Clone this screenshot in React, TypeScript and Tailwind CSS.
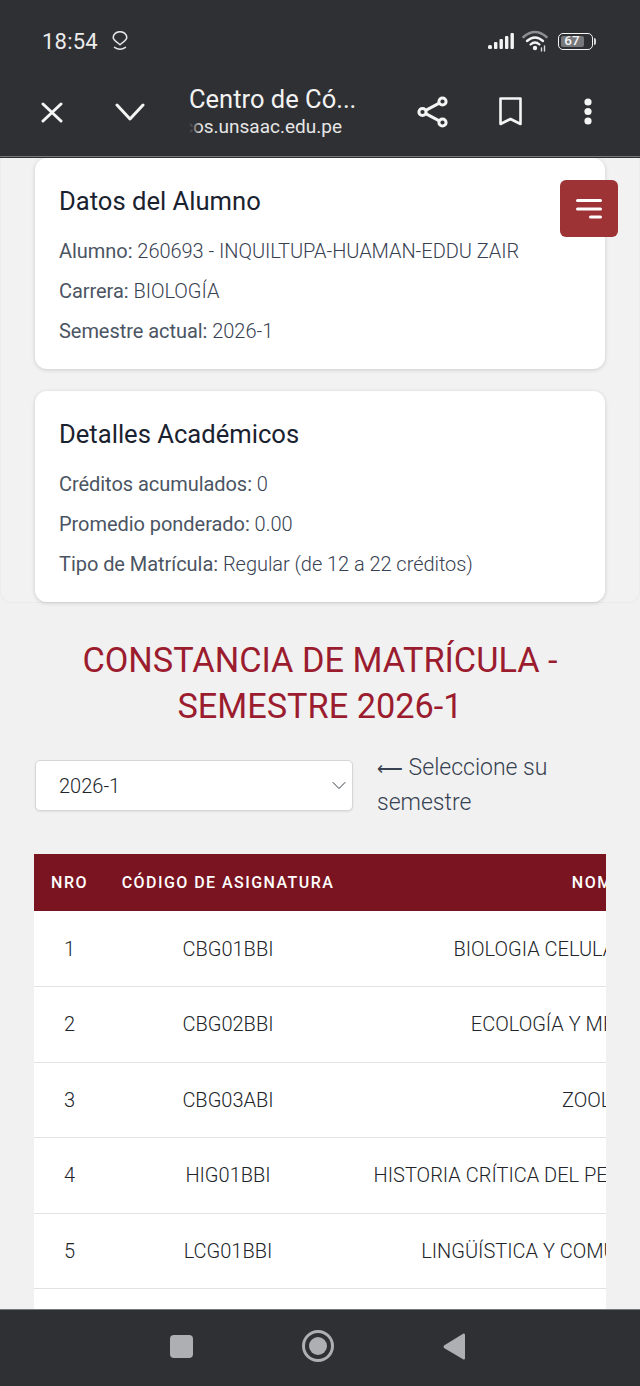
import React from "react";

const rows: [string, string, string][] = [
  ["1", "CBG01BBI", "BIOLOGIA CELULAR Y MOLECULAR"],
  ["2", "CBG02BBI", "ECOLOGÍA Y MEDIO AMBIENTE"],
  ["3", "CBG03ABI", "ZOOLOGÍA"],
  ["4", "HIG01BBI", "HISTORIA CRÍTICA DEL PERÚ Y DEL MUNDO ACTUAL"],
  ["5", "LCG01BBI", "LINGÜÍSTICA Y COMUNICACIÓN HUMANA"],
];

function Line({ label, value }: { label: string; value: string }) {
  return (
    <p className="text-[20px] leading-[30px] mt-[10px] text-[#4b5563] whitespace-nowrap tracking-[-0.05px]">
      {label}: <span className="font-light text-[#374151]">{value}</span>
    </p>
  );
}

function Card({ title, children }: { title: string; children: React.ReactNode }) {
  return (
    <section className="bg-white rounded-xl shadow-[0_1px_4px_rgba(0,0,0,0.16)] h-[211px] px-6 pt-[25px]">
      <h2 className="text-[25.6px] leading-[36px] text-[#1a2230] font-normal mb-[17px]">{title}</h2>
      {children}
    </section>
  );
}

function Status() {
  return (
    <div className="h-[82px] flex items-center justify-between pl-[42px] pr-[44px]">
      <div className="flex items-center gap-[14px]">
        <span className="text-[22px] text-[#ececec] font-normal tracking-[0.2px]">18:54</span>
        <svg width="16" height="20" viewBox="0 0 16 20" fill="none" stroke="#e4e4e4" strokeWidth="1.5">
          <path d="M8 13.8 C5.5 11.2 1.2 9.6 1.2 6.6 A6.8 5.9 0 0 1 14.8 6.6 C14.8 9.6 10.5 11.2 8 13.8 Z" strokeLinejoin="round" />
          <path d="M2.5 16.3 Q8 20 13.5 16.3" strokeLinecap="round" />
        </svg>
      </div>
      <div className="flex items-center gap-[8px]">
        <svg width="26" height="16" viewBox="0 0 26 16" fill="#f3f3f3">
          <rect x="0" y="12" width="4" height="4" rx="1.5" />
          <rect x="6" y="9" width="3.4" height="7" rx="1" />
          <rect x="11.5" y="6" width="3.4" height="10" rx="1" />
          <rect x="17" y="3" width="3.4" height="13" rx="1" />
          <rect x="22.5" y="0" width="3.4" height="16" rx="1" />
        </svg>
        <svg width="27" height="22" viewBox="0 0 27 22" fill="none" strokeLinecap="round">
          <path d="M1.5 7 Q13 -3 24.5 7" stroke="#8d8e90" strokeWidth="2.6" />
          <path d="M5 11 Q13 4 21 11" stroke="#f3f3f3" strokeWidth="2.4" />
          <path d="M8.5 14.5 Q13 10.5 17.5 14.5" stroke="#f3f3f3" strokeWidth="2.2" />
          <circle cx="13" cy="18" r="2.2" fill="#f3f3f3" />
          <path d="M19.5 18v3M22.5 16v5" stroke="#d8d8d8" strokeWidth="1.4" />
        </svg>
        <div className="flex items-center gap-[1px] ml-[1px]">
          <div className="w-[35px] h-[17px] rounded-[5px] border-[1.5px] border-[#f3f3f3] p-[2px] flex">
            <div className="w-[23px] h-full bg-[#77787b] rounded-[2px] flex items-center justify-center text-[13.5px] leading-none font-medium text-[#f3f3f3]">
              67
            </div>
          </div>
          <div className="w-[2.5px] h-[7px] rounded-r-sm bg-[#d8d8d8]" />
        </div>
      </div>
    </div>
  );
}

function BrowserBar() {
  const ic = "#f4f4f4";
  return (
    <div className="h-[75px] border-b border-b-[#77787b] flex items-start">
      <div className="w-[115px] pl-[41px] pt-[20px]">
        <svg className="block" width="22" height="21" viewBox="0 0 22 21" stroke={ic} strokeWidth="3" strokeLinecap="round">
          <path d="M2 2 L20 19 M20 2 L2 19" />
        </svg>
      </div>
      <div className="w-[74px] pt-[21px]">
        <svg className="block" width="30" height="18" viewBox="0 0 30 18" fill="none" stroke={ic} strokeWidth="3" strokeLinecap="round" strokeLinejoin="round">
          <path d="M2 2 L15 16 L28 2" />
        </svg>
      </div>
      <div className="w-[228px]">
        <p className="text-[25.5px] leading-[32px] mt-[1px] text-[#f2f2f2] whitespace-nowrap">Centro de Có...</p>
        <div className="relative w-[153px] h-[26px] overflow-hidden flex justify-end">
          <span className="text-[19px] leading-[34px] -mt-[5px] text-[#e6e6e6] whitespace-nowrap">academicos.unsaac.edu.pe</span>
          <div className="absolute left-0 top-0 bottom-0 w-[12px] bg-gradient-to-r from-[#2f3034] to-transparent" />
        </div>
      </div>
      <div className="w-[82px] pt-[14px]">
        <svg className="block" width="31" height="32" viewBox="0 0 31 32" fill="none" stroke={ic} strokeWidth="3">
          <circle cx="25.5" cy="5.5" r="3.6" />
          <circle cx="5.5" cy="16" r="3.6" />
          <circle cx="25.5" cy="26.5" r="3.6" />
          <path d="M8.7 14.3 L22.3 7.2 M8.7 17.7 L22.3 24.8" />
        </svg>
      </div>
      <div className="w-[85px] pt-[15px]">
        <svg className="block" width="23" height="29" viewBox="0 0 23 29" fill="none" stroke={ic} strokeWidth="2.6" strokeLinejoin="round">
          <path d="M1.5 1.5 H21.5 V27 L11.5 22 L1.5 27 Z" />
        </svg>
      </div>
      <div className="pt-[16px]">
        <svg className="block" width="8" height="27" viewBox="0 0 8 27" fill={ic}>
          <circle cx="4" cy="4" r="3.6" />
          <circle cx="4" cy="13.5" r="3.6" />
          <circle cx="4" cy="23" r="3.6" />
        </svg>
      </div>
    </div>
  );
}

export default function App() {
  return (
    <div
      className="w-[640px] h-[1386px] flex flex-col overflow-hidden bg-[#f1f1f1]"
      style={{ fontFamily: "Roboto, 'Noto Sans', sans-serif" }}
    >
      <header className="bg-[#2f3034] shrink-0 h-[158px]">
        <Status />
        <BrowserBar />
      </header>

      <main className="relative flex-1 min-h-0 overflow-hidden">
        <button className="absolute left-[560px] top-[22px] w-[58px] h-[57px] rounded-[6px] bg-[#9e3335] flex items-center justify-center">
          <svg className="block" width="26" height="20" viewBox="0 0 26 20" stroke="#fff" strokeWidth="3" strokeLinecap="round">
            <path d="M1.5 1.5 H24.5 M1.5 10 H24.5 M14.5 18 H24.5" />
          </svg>
        </button>

        <div className="h-[445px] rounded-b-xl bg-[#f2f2f2] border-b border-x border-[#ebebeb] pl-[34px] pr-[34px] flex flex-col gap-[22px]">
          <Card title="Datos del Alumno">
            <Line label="Alumno" value="260693 - INQUILTUPA-HUAMAN-EDDU ZAIR" />
            <Line label="Carrera" value="BIOLOGÍA" />
            <Line label="Semestre actual" value="2026-1" />
          </Card>
          <Card title="Detalles Académicos">
            <Line label="Créditos acumulados" value="0" />
            <Line label="Promedio ponderado" value="0.00" />
            <Line label="Tipo de Matrícula" value="Regular (de 12 a 22 créditos)" />
          </Card>
        </div>

        <h1 className="mt-[34px] text-center text-[34.3px] leading-[46px] font-normal text-[#9b1c2e]">
          CONSTANCIA DE MATRÍCULA -<br />SEMESTRE 2026-1
        </h1>

        <div className="mt-[22px] ml-[35px] flex items-start">
          <div className="mt-[9px] w-[318px] h-[51px] bg-white rounded-[5px] border border-[#d6d6d6] shadow-[0_1px_2px_rgba(0,0,0,0.08)] pl-[23px] pr-[6px] flex items-center justify-between">
            <span className="text-[20px] font-light text-[#212529]">2026-1</span>
            <svg className="block" width="14" height="9" viewBox="0 0 14 9" fill="none" stroke="#343a40" strokeWidth="1" strokeLinecap="round" strokeLinejoin="round">
              <path d="M1 1.5 L7 7.5 L13 1.5" />
            </svg>
          </div>
          <p className="ml-[24px] w-[200px] text-[23px] leading-[34px] font-light text-[#374151]">
            <span className="text-[18px]">⟵</span> Seleccione su semestre
          </p>
        </div>

        <div className="mt-[34px] ml-[34px] w-[572px] overflow-hidden">
          <table className="w-[833px] table-fixed border-collapse bg-white">
            <colgroup>
              <col className="w-[71px]" />
              <col className="w-[246px]" />
              <col className="w-[516px]" />
            </colgroup>
            <thead>
              <tr className="h-[57px] bg-[#7b1421] text-white text-[16px] tracking-[1.45px]">
                <th className="font-medium">NRO</th>
                <th className="font-medium">CÓDIGO DE ASIGNATURA</th>
                <th className="font-medium">NOMBRE</th>
              </tr>
            </thead>
            <tbody>
              {rows.map((r) => (
                <tr key={r[0]} className="h-[75.5px] border-b border-[#e2e2e2] text-[20px] font-light text-[#212529] text-center">
                  <td>{r[0]}</td>
                  <td>{r[1]}</td>
                  <td className="whitespace-nowrap">{r[2]}</td>
                </tr>
              ))}
              <tr className="h-[75.5px]">
                <td colSpan={3} />
              </tr>
            </tbody>
          </table>
        </div>
      </main>

      <nav className="shrink-0 h-[77px] bg-[#2f3034] border-t border-t-[#77787b] flex items-center justify-center pb-[4px]">
        <div className="w-[23px] h-[23px] rounded-[4px] bg-[#aeafb2] -ml-[5px]" />
        <div className="ml-[109px] w-[32px] h-[32px] rounded-full border-[3px] border-[#aeafb2] flex items-center justify-center">
          <div className="w-[18px] h-[18px] rounded-full bg-[#aeafb2]" />
        </div>
        <svg className="block ml-[109px]" width="22" height="27" viewBox="0 0 22 27" fill="#aeafb2">
          <path d="M20.5 0.5 Q22 0 22 2 V25 Q22 27 20.5 26.5 L1 15 Q0 13.5 1 12.5 Z" />
        </svg>
      </nav>
    </div>
  );
}
